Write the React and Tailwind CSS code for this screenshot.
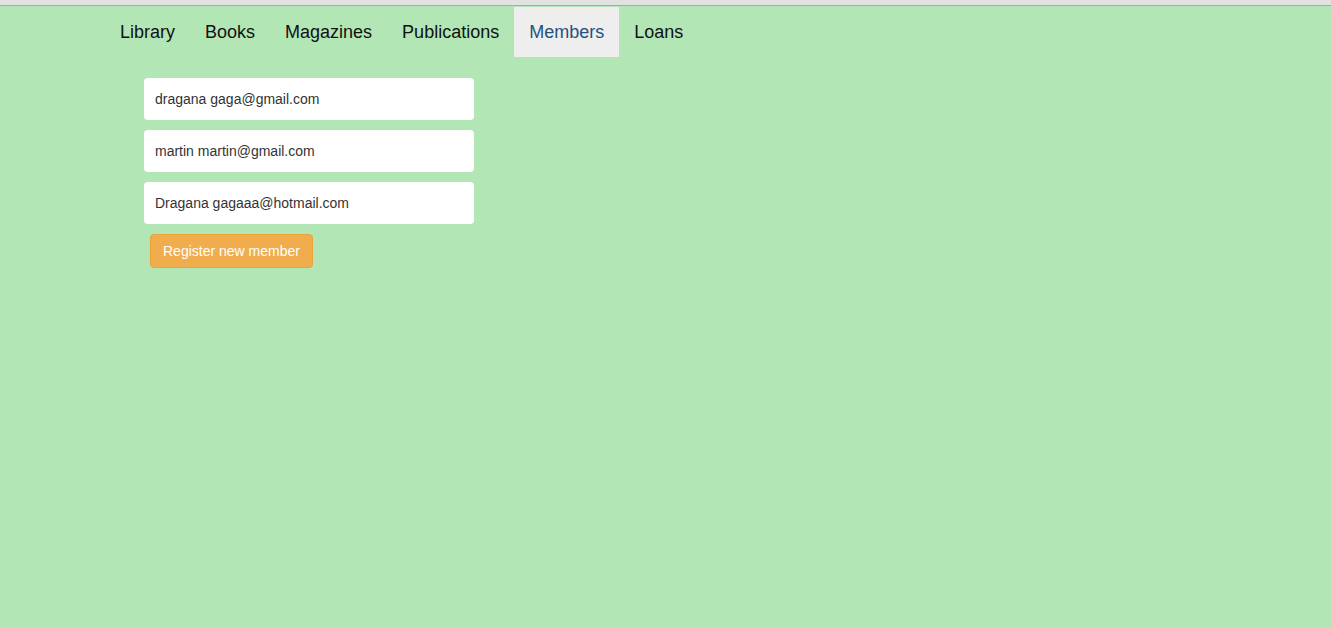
import React from 'react';

const links = ['Library', 'Books', 'Magazines', 'Publications', 'Members', 'Loans'];

const members = [
    'dragana gaga@gmail.com',
    'martin martin@gmail.com',
    'Dragana gagaaa@hotmail.com',
];

const App = () => {
    return (
        <div className="min-h-screen bg-[#b3e6b5] text-[#333]" style={{ fontFamily: '"Liberation Sans", Arial, sans-serif' }}>
            <div className="h-[5px] bg-[#e2e2e2]"></div>
            <div className="h-px bg-[#a9a9a9]"></div>

            <nav className="flex pl-[105px] pt-px">
                {links.map((name) => (
                    <a
                        key={name}
                        className={
                            name === 'Members'
                                ? 'px-[15px] py-[15px] text-[18px] leading-5 bg-[#eeeeee] text-[#23527c]'
                                : 'px-[15px] py-[15px] text-[18px] leading-5 text-[#111]'
                        }
                    >
                        {name}
                    </a>
                ))}
            </nav>

            <div className="pl-[144px] pt-[21px] flex flex-col">
                {members.map((m) => (
                    <div key={m} className="w-[330px] h-[42px] mb-[10px] bg-white rounded flex items-center px-[11px] text-[14px]">
                        {m}
                    </div>
                ))}
                <div className="pl-[6px]">
                    <button className="h-[34px] px-[12px] text-[14px] text-white bg-[#f0ad4e] border border-[#eea236] rounded">
                        Register new member
                    </button>
                </div>
            </div>
        </div>
    );
};

export default App;
